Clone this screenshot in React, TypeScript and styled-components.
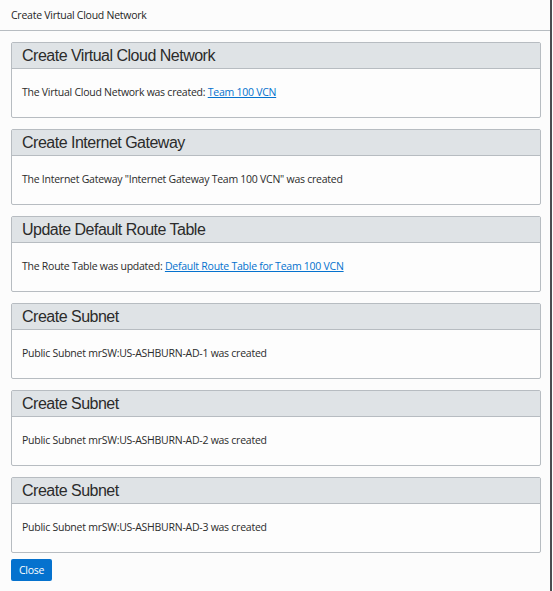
import React from 'react';
import styled, { createGlobalStyle } from 'styled-components';

const GlobalStyle = createGlobalStyle`
  html, body {
    margin: 0;
    padding: 0;
    background: #fcfcfc;
  }
  * {
    box-sizing: border-box;
  }
`;

interface Step {
  title: string;
  message: string;
  link?: string;
}

const steps: Step[] = [
  {
    title: 'Create Virtual Cloud Network',
    message: 'The Virtual Cloud Network was created: ',
    link: 'Team 100 VCN',
  },
  {
    title: 'Create Internet Gateway',
    message: 'The Internet Gateway "Internet Gateway Team 100 VCN" was created',
  },
  {
    title: 'Update Default Route Table',
    message: 'The Route Table was updated: ',
    link: 'Default Route Table for Team 100 VCN',
  },
  {
    title: 'Create Subnet',
    message: 'Public Subnet mrSW:US-ASHBURN-AD-1 was created',
  },
  {
    title: 'Create Subnet',
    message: 'Public Subnet mrSW:US-ASHBURN-AD-2 was created',
  },
  {
    title: 'Create Subnet',
    message: 'Public Subnet mrSW:US-ASHBURN-AD-3 was created',
  },
];

const App: React.FC = () => {
  return (
    <>
      <GlobalStyle />
      <Dialog>
        <DialogHeader>Create Virtual Cloud Network</DialogHeader>
        <DialogBody>
          {steps.map((step, i) => (
            <Panel key={i}>
              <PanelHeader>{step.title}</PanelHeader>
              <PanelBody>
                {step.message}
                {step.link && <Link href="#">{step.link}</Link>}
              </PanelBody>
            </Panel>
          ))}
          <Footer>
            <CloseButton type="button">Close</CloseButton>
          </Footer>
        </DialogBody>
      </Dialog>
    </>
  );
};

export default App;

const Dialog = styled.div`
  width: 552px;
  height: 591px;
  background: #fcfcfc;
  border-right: 2px solid #4b4d50;
  font-family: 'Open Sans', 'Liberation Sans', sans-serif;
  color: #2b2b2b;
`;

const DialogHeader = styled.div`
  height: 31px;
  padding: 0 11px 1px;
  display: flex;
  align-items: center;
  border-bottom: 1px solid #b7bcc1;
  font-size: 10.5px;
  letter-spacing: -0.25px;
  color: #1f1f1f;
`;

const DialogBody = styled.div`
  display: flex;
  flex-direction: column;
  gap: 11px;
  padding: 11px 9px 0 11px;
`;

const Panel = styled.section`
  width: 530px;
  border: 1px solid #b7bcc1;
  border-radius: 2px;
  background: #fdfdfd;
`;

const PanelHeader = styled.h2`
  margin: 0;
  height: 26px;
  padding: 0 10px 0 10px;
  display: flex;
  align-items: center;
  background: #dfe3e6;
  border-bottom: 1px solid #b7bcc1;
  font-family: 'Liberation Sans', Arial, sans-serif;
  font-size: 16px;
  letter-spacing: -0.5px;
  font-weight: normal;
  color: #2b2b2b;
`;

const PanelBody = styled.div`
  height: 48px;
  padding: 0 10px 3px;
  display: flex;
  align-items: center;
  white-space: pre;
  font-size: 10.5px;
  letter-spacing: -0.25px;
`;

const Link = styled.a`
  color: #0572ce;
  text-decoration: underline;
`;

const Footer = styled.div`
  display: flex;
  margin-top: -5px;
`;

const CloseButton = styled.button`
  width: 41px;
  height: 22px;
  padding: 0 0 1px;
  border: none;
  border-radius: 2px;
  background: #0572ce;
  color: #fff;
  font-family: 'Open Sans', 'Liberation Sans', sans-serif;
  font-size: 10.5px;
  letter-spacing: -0.25px;
  cursor: pointer;
`;
